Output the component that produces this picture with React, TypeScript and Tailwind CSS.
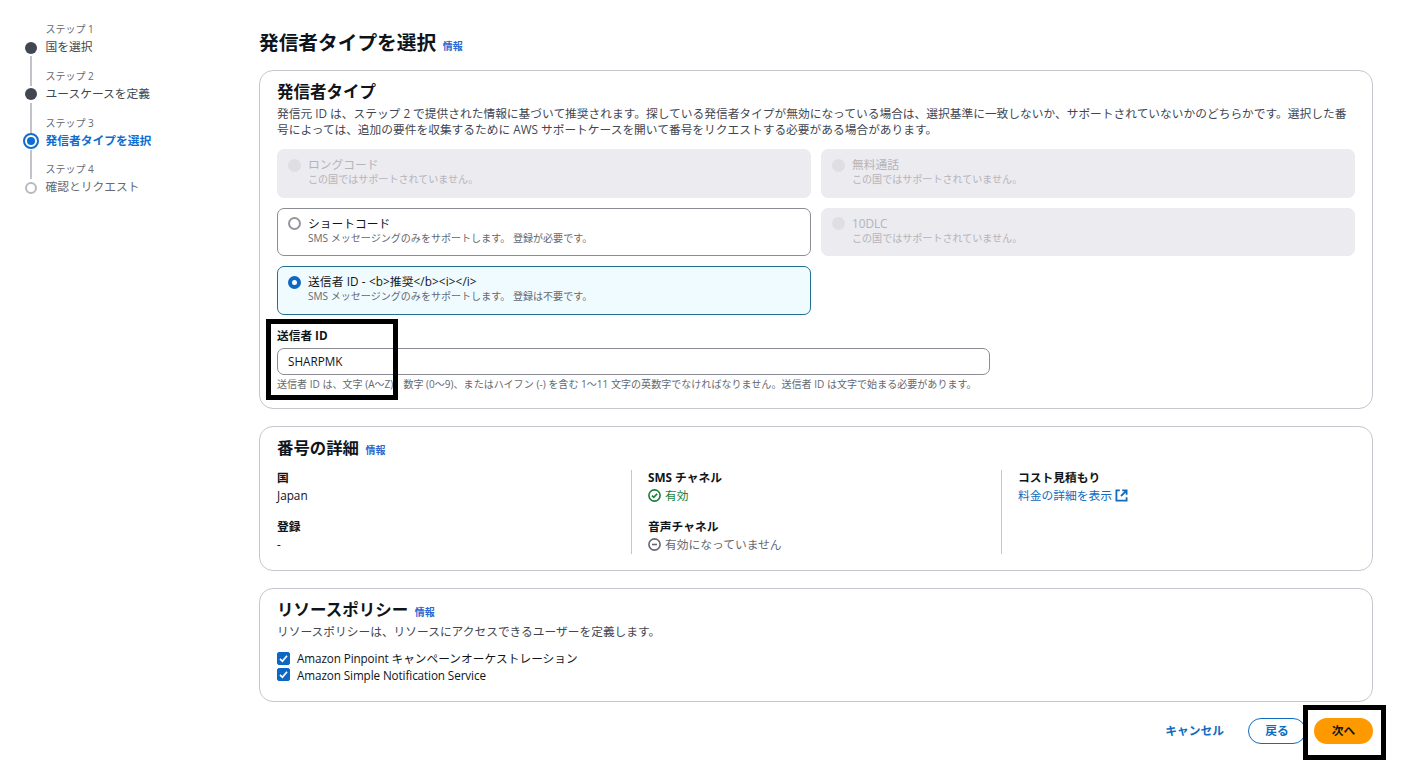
import React, { useState } from 'react';

interface Step {
  label: string;
  title: string;
  status: 'done' | 'active' | 'pending';
}

interface TileProps {
  title: string;
  description: string;
  selected?: boolean;
  disabled?: boolean;
  onSelect?: () => void;
}

const steps: Step[] = [
  { label: 'ステップ 1', title: '国を選択', status: 'done' },
  { label: 'ステップ 2', title: 'ユースケースを定義', status: 'done' },
  { label: 'ステップ 3', title: '発信者タイプを選択', status: 'active' },
  { label: 'ステップ 4', title: '確認とリクエスト', status: 'pending' },
];

const StepMarker: React.FC<{ status: Step['status'] }> = ({ status }) => {
  if (status === 'done') {
    return <span className="block w-3 h-3 rounded-full bg-[#424650]" />;
  }
  if (status === 'active') {
    return (
      <span className="flex w-4 h-4 items-center justify-center rounded-full border-2 border-[#0f6cd0]">
        <span className="block w-2 h-2 rounded-full bg-[#0f6cd0]" />
      </span>
    );
  }
  return <span className="block w-3 h-3 rounded-full border-2 border-[#b8b8bf]" />;
};

const stepTitleClass = {
  done: 'text-[#424650]',
  active: 'font-bold text-[#0f6cd0]',
  pending: 'text-[#656871]',
};

const StepNavigation: React.FC = () => (
  <nav className="w-[259px] shrink-0 pt-[21px] pl-[22px]">
    <ol>
      {steps.map((step, index) => (
        <li key={step.label} className="flex h-[46.8px]">
          <div className="flex w-[18px] flex-col items-center">
            <span className={`w-0.5 h-[18px] ${index > 0 ? 'bg-[#c2c2c8]' : ''}`} />
            <span className="flex h-[17px] shrink-0 items-center">
              <StepMarker status={step.status} />
            </span>
            <span className={`w-0.5 flex-1 ${index < steps.length - 1 ? 'bg-[#c2c2c8]' : ''}`} />
          </div>
          <div className="pl-[5.5px] whitespace-nowrap">
            <p className="h-[17px] text-[10px] leading-[17px] text-[#656871]">{step.label}</p>
            <p className={`text-[11.75px] leading-[17px] ${stepTitleClass[step.status]}`}>{step.title}</p>
          </div>
        </li>
      ))}
    </ol>
  </nav>
);

const InfoLink: React.FC = () => (
  <a href="#" className="ml-[6.5px] text-[10px] font-bold text-[#2a68cf]">情報</a>
);

const Radio: React.FC<{ selected?: boolean; disabled?: boolean }> = ({ selected, disabled }) => {
  if (disabled) {
    return <span className="block w-[13px] h-[13px] rounded-full bg-[#dedee3]" />;
  }
  if (selected) {
    return <span className="block w-[13px] h-[13px] rounded-full border-4 border-[#0f67c4] bg-white" />;
  }
  return <span className="block w-[13px] h-[13px] rounded-full border-2 border-[#95959c] bg-white" />;
};

const Tile: React.FC<TileProps> = ({ title, description, selected, disabled, onSelect }) => {
  let box = 'border-[#8c8c94] bg-white';
  if (disabled) box = 'border-[#ebebf0] bg-[#ebebf0]';
  if (selected) box = 'border-[#21708f] bg-[#f0fbff]';

  return (
    <button
      type="button"
      role="radio"
      aria-checked={!!selected}
      disabled={disabled}
      onClick={onSelect}
      className={`flex items-start rounded-[7px] border pl-2.5 pt-1.5 text-left whitespace-nowrap ${box}`}
    >
      <span className="pt-[2.5px]">
        <Radio selected={selected} disabled={disabled} />
      </span>
      <span className="pl-[7px]">
        <span className={`block text-[11.75px] leading-4 ${disabled ? 'text-[#b4b4bb]' : 'text-[#0f141a]'} ${title.includes('<') ? 'tracking-[0.1px]' : ''}`}>{title}</span>
        <span className={`block text-[10.05px] leading-[15px] ${disabled ? 'text-[#b4b4bb]' : 'text-[#656871]'}`}>{description}</span>
      </span>
    </button>
  );
};

const Checkbox: React.FC<{ label: React.ReactNode; checked: boolean; onChange: () => void }> = ({ label, checked, onChange }) => (
  <label className="flex h-[16.5px] items-center whitespace-nowrap">
    <input type="checkbox" className="sr-only" checked={checked} onChange={onChange} />
    <svg className="w-[13px] h-[13px] shrink-0" viewBox="0 0 13 13" aria-hidden="true">
      <rect x="0.5" y="0.5" width="12" height="12" rx="1.5" fill={checked ? '#0f67c4' : '#fff'} stroke={checked ? '#0f67c4' : '#8c8c94'} />
      {checked && <path d="M3 6.8l2.4 2.5L10 3.7" fill="none" stroke="#fff" strokeWidth="1.7" />}
    </svg>
    <span className="pl-[7px] text-[11.7px] leading-4 text-[#0f141a]">{label}</span>
  </label>
);

const SuccessIcon: React.FC = () => (
  <svg className="w-[13px] h-[13px]" viewBox="0 0 13 13" fill="none" stroke="currentColor" strokeWidth="1.6" aria-hidden="true">
    <circle cx="6.5" cy="6.5" r="5.6" />
    <path d="M4 6.6l1.8 1.8L9.1 4.7" />
  </svg>
);

const DisabledIcon: React.FC = () => (
  <svg className="w-[13px] h-[13px]" viewBox="0 0 13 13" fill="none" stroke="currentColor" strokeWidth="1.6" aria-hidden="true">
    <circle cx="6.5" cy="6.5" r="5.6" />
    <path d="M4 6.5h5" />
  </svg>
);

const ExternalIcon: React.FC = () => (
  <svg className="w-[13px] h-[13px]" viewBox="0 0 13 13" fill="none" stroke="currentColor" strokeWidth="1.8" aria-hidden="true">
    <path d="M4.8 1.4H1.4v10.2h10.2V8.2" />
    <path d="M7.2 1.4h4.4v4.4M11.4 1.6L6 7" />
  </svg>
);

const Detail: React.FC<{ label: string; children: React.ReactNode }> = ({ label, children }) => (
  <div className="h-[50px] text-[11.75px] leading-[17px] whitespace-nowrap">
    <dt className="-mt-px mb-px font-bold text-[#0f141a]">{label}</dt>
    <dd className="flex h-[17px] items-center gap-1">{children}</dd>
  </div>
);

const App: React.FC = () => {
  const [type, setType] = useState('sender');
  const [senderId, setSenderId] = useState('SHARPMK');
  const [policies, setPolicies] = useState({ pinpoint: true, sns: true });

  return (
    <div className="relative flex h-[771px] w-[1411px] overflow-hidden bg-white font-['Open_Sans','Noto_Sans_CJK_JP',sans-serif] text-[#0f141a]">
      <StepNavigation />

      <main className="w-[1114px]">
        <h1 className="mt-[28px] flex h-[42px] items-baseline text-[19.7px] leading-[29px] font-bold whitespace-nowrap">
          発信者タイプを選択 <InfoLink />
        </h1>

        <section className="h-[339px] rounded-[14px] border border-[#c6c6cd] px-[17px] pt-[9px]">
          <h2 className="mb-px text-[16.5px] leading-6 font-bold">発信者タイプ</h2>
          <p className="text-[11.72px] leading-4 whitespace-nowrap text-[#424650]">
            発信元 ID は、ステップ 2 で提供された情報に基づいて推奨されます。探している発信者タイプが無効になっている場合は、選択基準に一致しないか、サポートされていないかのどちらかです。選択した番
            <br />
            号によっては、追加の要件を収集するために AWS サポートケースを開いて番号をリクエストする必要がある場合があります。
          </p>

          <div role="radiogroup" className="mt-3 grid grid-cols-2 auto-rows-[48.6px] gap-2.5">
            <Tile title="ロングコード" description="この国ではサポートされていません。" disabled />
            <Tile title="無料通話" description="この国ではサポートされていません。" disabled />
            <Tile
              title="ショートコード"
              description="SMS メッセージングのみをサポートします。 登録が必要です。"
              selected={type === 'short'}
              onSelect={() => setType('short')}
            />
            <Tile title="10DLC" description="この国ではサポートされていません。" disabled />
            <Tile
              title="送信者 ID - <b>推奨</b><i></i>"
              description="SMS メッセージングのみをサポートします。 登録は不要です。"
              selected={type === 'sender'}
              onSelect={() => setType('sender')}
            />
          </div>

          <div className="mt-3">
            <label htmlFor="sender-id" className="block text-[11.7px] leading-4 font-bold">送信者 ID</label>
            <input
              id="sender-id"
              value={senderId}
              onChange={(event) => setSenderId(event.target.value)}
              className="mt-[5px] block h-[27px] w-[713px] rounded-[7px] border border-[#8c8c94] px-2.5 text-[11.7px] outline-none"
            />
            <p className="mt-px text-[10.05px] leading-4 whitespace-nowrap text-[#656871]">
              送信者 ID は、文字 (A～Z)、数字 (0～9)、またはハイフン (-) を含む 1～11 文字の英数字でなければなりません。送信者 ID は文字で始まる必要があります。
            </p>
          </div>
        </section>

        <section className="mt-[17px] h-[145px] rounded-[14px] border border-[#c6c6cd] px-[17px] pt-[9px]">
          <h2 className="flex items-baseline text-[16.4px] leading-6 font-bold">
            番号の詳細 <InfoLink />
          </h2>
          <dl className="mt-2 flex h-[84px]">
            <div className="w-[354px]">
              <Detail label="国">Japan</Detail>
              <Detail label="登録">-</Detail>
            </div>
            <div className="w-[370px] border-l border-[#c6c6cd] pl-4">
              <Detail label="SMS チャネル">
                <span className="flex items-center gap-1 text-[#1a7f3c]"><SuccessIcon /> 有効</span>
              </Detail>
              <Detail label="音声チャネル">
                <span className="flex items-center gap-1 text-[#656871]"><DisabledIcon /> 有効になっていません</span>
              </Detail>
            </div>
            <div className="flex-1 border-l border-[#c6c6cd] pl-4">
              <Detail label="コスト見積もり">
                <a href="#" className="flex items-center gap-[3px] text-[#0f6cbf]">料金の詳細を表示 <ExternalIcon /></a>
              </Detail>
            </div>
          </dl>
        </section>

        <section className="mt-[17px] h-[114px] rounded-[14px] border border-[#c6c6cd] px-[17px] pt-[9px]">
          <h2 className="flex items-baseline text-[16.5px] leading-6 font-bold">
            リソースポリシー <InfoLink />
          </h2>
          <p className="-mt-px text-[11.72px] leading-4 text-[#424650]">リソースポリシーは、リソースにアクセスできるユーザーを定義します。</p>
          <div className="mt-[11px]">
            <Checkbox
              label={<><span className="tracking-[-0.1px]">Amazon Pinpoint </span>キャンペーンオーケストレーション</>}
              checked={policies.pinpoint}
              onChange={() => setPolicies({ ...policies, pinpoint: !policies.pinpoint })}
            />
            <Checkbox
              label={<span className="tracking-[-0.1px]">Amazon Simple Notification Service</span>}
              checked={policies.sns}
              onChange={() => setPolicies({ ...policies, sns: !policies.sns })}
            />
          </div>
        </section>

        <div className="mt-4 flex h-[26px] justify-end text-[11.75px] font-bold whitespace-nowrap">
          <button type="button" className="mr-6 text-[#0f6cbf]">キャンセル</button>
          <button type="button" className="mr-2 w-[58px] rounded-full border-[1.6px] border-[#0f6cbf] text-[#0f6cbf]">戻る</button>
          <button type="button" className="w-[59px] rounded-full bg-[#ff9900] text-[#0f141a]">次へ</button>
        </div>
      </main>

      {/* highlight frames over the sender ID field and the next button */}
      <div className="pointer-events-none absolute top-[319px] left-[266px] h-[81px] w-[132px] border-[5px] border-black" />
      <div className="pointer-events-none absolute top-[705px] left-[1303px] h-[55px] w-[83px] border-[5px] border-black" />
    </div>
  );
};

export default App;
